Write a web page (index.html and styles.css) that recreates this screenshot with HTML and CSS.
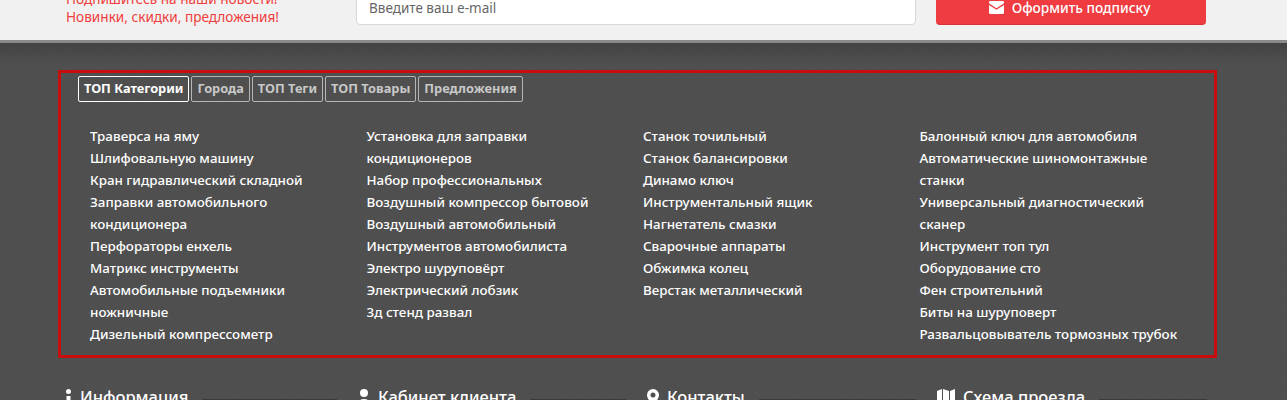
FILE: index.html
```html
<!DOCTYPE html>
<html lang="ru">
<head>
    <meta charset="UTF-8">
    <meta name="viewport" content="width=device-width, initial-scale=1.0">
    <title>Подписка и подвал</title>
    <link rel="stylesheet" href="styles.css">
</head>
<body>
    <section class="subscribe">
        <div class="subscribe-text">
            <p>Подпишитесь на наши новости!</p>
            <p>Новинки, скидки, предложения!</p>
        </div>
        <input class="subscribe-input" type="text" placeholder="Введите ваш e-mail">
        <button class="subscribe-button">
            <svg class="mail-icon" viewBox="0 0 14 12" width="15" height="13" aria-hidden="true">
                <path d="M1 0h12a1 1 0 0 1 1 1v1L7 6.6 0 2V1a1 1 0 0 1 1-1z" fill="#fff"/>
                <path d="M0 3.6l7 4.4 7-4.4V11a1 1 0 0 1-1 1H1a1 1 0 0 1-1-1z" fill="#fff"/>
            </svg>
            Оформить подписку
        </button>
    </section>

    <footer class="footer">
        <div class="seo-box">
            <div class="tabs">
                <span class="tab active">ТОП Категории</span>
                <span class="tab">Города</span>
                <span class="tab">ТОП Теги</span>
                <span class="tab">ТОП Товары</span>
                <span class="tab">Предложения</span>
            </div>
            <div class="seo-columns">
                <ul class="seo-list">
                    <li>Траверса на яму</li>
                    <li>Шлифовальную машину</li>
                    <li>Кран гидравлический складной</li>
                    <li>Заправки автомобильного кондиционера</li>
                    <li>Перфораторы енхель</li>
                    <li>Матрикс инструменты</li>
                    <li>Автомобильные подъемники ножничные</li>
                    <li>Дизельный компрессометр</li>
                </ul>
                <ul class="seo-list">
                    <li>Установка для заправки кондиционеров</li>
                    <li>Набор профессиональных</li>
                    <li>Воздушный компрессор бытовой</li>
                    <li>Воздушный автомобильный</li>
                    <li>Инструментов автомобилиста</li>
                    <li>Электро шуруповёрт</li>
                    <li>Электрический лобзик</li>
                    <li>3д стенд развал</li>
                </ul>
                <ul class="seo-list">
                    <li>Станок точильный</li>
                    <li>Станок балансировки</li>
                    <li>Динамо ключ</li>
                    <li>Инструментальный ящик</li>
                    <li>Нагнетатель смазки</li>
                    <li>Сварочные аппараты</li>
                    <li>Обжимка колец</li>
                    <li>Верстак металлический</li>
                </ul>
                <ul class="seo-list">
                    <li>Балонный ключ для автомобиля</li>
                    <li>Автоматические шиномонтажные станки</li>
                    <li>Универсальный диагностический сканер</li>
                    <li>Инструмент топ тул</li>
                    <li>Оборудование сто</li>
                    <li>Фен строительний</li>
                    <li>Биты на шуруповерт</li>
                    <li>Развальцовыватель тормозных трубок</li>
                </ul>
            </div>
        </div>

        <div class="footer-columns">
            <h4 class="footer-title">
                <svg class="footer-icon" viewBox="0 0 6 16" width="6" height="16" aria-hidden="true"><circle cx="2.5" cy="2.5" r="2.5" fill="#fff"/><rect x="0.5" y="7" width="4" height="9" fill="#fff"/></svg>
                <span>Информация</span>
            </h4>
            <h4 class="footer-title">
                <svg class="footer-icon" viewBox="0 0 12 16" width="12" height="16" aria-hidden="true"><circle cx="6" cy="4" r="4" fill="#fff"/><path d="M0 16c0-4 2-6 6-6s6 2 6 6z" fill="#fff"/></svg>
                <span>Кабинет клиента</span>
            </h4>
            <h4 class="footer-title">
                <svg class="footer-icon" viewBox="0 0 12 16" width="12" height="16" aria-hidden="true"><path fill-rule="evenodd" d="M6 0a6 6 0 0 1 6 6c0 3-3 7-6 10C3 13 0 9 0 6a6 6 0 0 1 6-6zm0 3.5a2.5 2.5 0 1 0 0 5 2.5 2.5 0 0 0 0-5z" fill="#fff"/></svg>
                <span>Контакты</span>
            </h4>
            <h4 class="footer-title">
                <svg class="footer-icon" viewBox="0 0 18 16" width="18" height="16" aria-hidden="true"><path d="M0 2l5-2v14l-5 2zM6 0l6 2v14l-6-2zM13 2l5-2v14l-5 2z" fill="#fff"/></svg>
                <span>Схема проезда</span>
            </h4>
        </div>
    </footer>
</body>
</html>
```
FILE: styles.css
```css
html, body {
    margin: 0;
    padding: 0;
    height: 400px;
    overflow: hidden;
}

body {
    font-family: "Noto Sans", "Open Sans", sans-serif;
    background: #4f4f4f;
}

p, ul, h4 {
    margin: 0;
    padding: 0;
}

.subscribe {
    height: 43px;
    overflow: hidden;
    display: flex;
    align-items: flex-end;
    padding: 0 81px 15px 66px;
    box-sizing: border-box;
    background: #f1f1f1;
    border-bottom: 3px solid #8a8a8a;
}

.subscribe-text {
    width: 290px;
    flex: none;
    font-size: 13.6px;
    line-height: 18px;
    color: #f03c3c;
    margin-bottom: -1px;
}

.subscribe-input {
    flex: none;
    width: 560px;
    height: 34px;
    box-sizing: border-box;
    padding: 0 12px;
    border: 1px solid #d8d8d8;
    border-radius: 4px;
    background: #fff;
    font-family: inherit;
    font-size: 13.5px;
}

.subscribe-input::placeholder {
    color: #666;
    opacity: 1;
}

.subscribe-button {
    flex: none;
    width: 270px;
    height: 35px;
    margin-left: 20px;
    padding: 0 3px 0 0;
    border: 0;
    border-bottom: 1px solid #d9343a;
    border-radius: 4px;
    background: #ee3c40;
    color: #fff;
    font-family: inherit;
    font-size: 13.7px;
    font-weight: 500;
    display: flex;
    align-items: center;
    justify-content: center;
    gap: 8px;
}

.footer {
    height: 357px;
    overflow: hidden;
    padding-top: 27px;
    box-sizing: border-box;
    background:
        repeating-linear-gradient(45deg, rgba(255, 255, 255, 0.008) 0 1px, rgba(0, 0, 0, 0.008) 1px 2px),
        linear-gradient(#434343, #4f4f4f 22px);
}

.seo-box {
    width: 1159px;
    height: 288px;
    margin-left: 58px;
    box-sizing: border-box;
    border: 3px solid #c80d0d;
    padding: 3px 0 0 17px;
}

.tabs {
    display: flex;
    gap: 2px;
}

.tab {
    height: 26px;
    box-sizing: border-box;
    padding: 0 5px;
    border: 1px solid #b5b5b5;
    border-radius: 2px;
    font-size: 12.8px;
    font-weight: 700;
    line-height: 23px;
    color: #c8c8c8;
}

.tab.active {
    border-color: #fff;
    color: #fff;
}

.seo-columns {
    display: grid;
    grid-template-columns: repeat(4, 276.5px);
    padding-top: 23px;
}

.seo-list {
    list-style: none;
    padding-left: 12px;
}

.seo-list li {
    font-size: 13.4px;
    font-weight: 500;
    line-height: 22px;
    color: #fff;
}

.footer-columns {
    display: grid;
    grid-template-columns: 292px 289px 290px 291px;
    margin: 29px 0 0 66px;
}

.footer-title {
    display: flex;
    align-items: flex-start;
    gap: 8px;
    padding-right: 21px;
    font-size: 16.5px;
    font-weight: 500;
    line-height: 20px;
    color: #fff;
}

.footer-title span {
    display: block;
}

/* dark rule that runs on from each heading */
.footer-title::after {
    content: "";
    flex: 1;
    margin: 12px 0 0 6px;
    border-top: 1px solid #3a3a3a;
}

.footer-icon {
    margin-top: 2px;
    flex: none;
}
```
